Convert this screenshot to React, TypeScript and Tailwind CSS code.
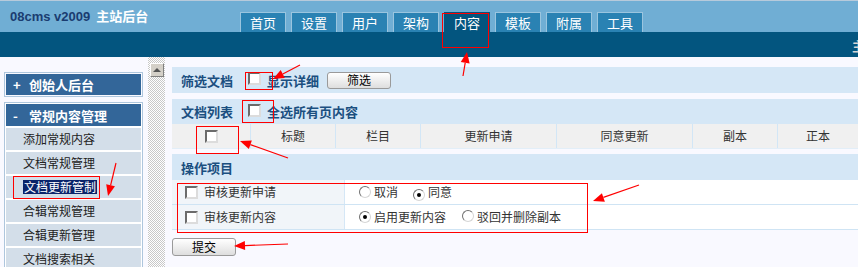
import React from 'react';

const tabs = ['首页', '设置', '用户', '架构', '内容', '模板', '附属', '工具'];
const items = ['添加常规内容', '文档常规管理', '文档更新管制', '合辑常规管理', '合辑更新管理', '文档搜索相关'];
const cols = ['', '标题', '栏目', '更新申请', '同意更新', '副本', '正本'];

function Check() {
  return (
    <span className="inline-block w-[13px] h-[13px] shrink-0 bg-white border-2 border-t-[#6b6b6b] border-l-[#6b6b6b] border-b-[#dcdcdc] border-r-[#dcdcdc]" />
  );
}

function Radio({ on }: { on?: boolean }) {
  return (
    <span className="inline-flex w-[12px] h-[12px] shrink-0 items-center justify-center rounded-full bg-white border border-t-[#707070] border-l-[#707070] border-b-[#d6d6d6] border-r-[#d6d6d6]">
      {on && <span className="w-[4px] h-[4px] rounded-full bg-black" />}
    </span>
  );
}

function Btn({ label, h }: { label: string; h: string }) {
  return (
    <button className={`w-[64px] ${h} rounded-[3px] border border-[#9a9a9a] bg-gradient-to-b from-white to-[#dedede] text-[12px] leading-none text-black`}>
      {label}
    </button>
  );
}

function Arrow({ x1, y1, x2, y2 }: { x1: number; y1: number; x2: number; y2: number }) {
  const dx = x2 - x1;
  const dy = y2 - y1;
  const len = Math.hypot(dx, dy);
  const ux = dx / len;
  const uy = dy / len;
  const bx = x2 - ux * 11;
  const by = y2 - uy * 11;
  const nx = -uy * 4.5;
  const ny = ux * 4.5;
  return (
    <g>
      <line x1={x1} y1={y1} x2={bx} y2={by} stroke="#ff0000" strokeWidth={1.2} />
      <polygon points={`${x2},${y2} ${bx + nx},${by + ny} ${bx - nx},${by - ny}`} fill="#ff0000" />
    </g>
  );
}

function Marks() {
  const rects = [
    [442, 13, 46, 34],
    [245, 72, 27, 17],
    [242, 100, 31, 22],
    [196, 126, 42, 27],
    [13, 176, 86, 22],
    [177, 183, 410, 49],
  ];
  return (
    <svg className="absolute left-0 top-0 pointer-events-none" width={858} height={267}>
      {rects.map(([x, y, w, h], i) => (
        <rect key={i} x={x + 0.5} y={y + 0.5} width={w} height={h} fill="none" stroke="#ff0000" strokeWidth={1} />
      ))}
      <Arrow x1={463} y1={76} x2={467} y2={52} />
      <Arrow x1={300} y1={65} x2={273} y2={79} />
      <Arrow x1={288} y1={158} x2={240} y2={141} />
      <Arrow x1={116} y1={163} x2={108} y2={196} />
      <Arrow x1={639} y1={185} x2={593} y2={201} />
      <Arrow x1={288} y1={244} x2={234} y2={246} />
    </svg>
  );
}

export default function App() {
  return (
    <div className="relative w-full h-[267px] overflow-hidden bg-[#f9f9ff] font-['Noto_Sans_CJK_SC',sans-serif] text-[12px]">
      {/* top header */}
      <div className="border-t border-[#b7cadb]">
        <div className="h-[31px] bg-[#70aed4] flex">
          <div className="w-[240px] shrink-0 pl-[10px] pt-[6px] font-bold leading-[18px] whitespace-nowrap">
            <span className="text-[#1a3c70] text-[13px] font-['Liberation_Sans',sans-serif]">08cms v2009</span>
            <span className="text-white ml-[6px] text-[13px]">主站后台</span>
          </div>
          <div className="flex gap-[5px] pt-[11px]">
            {tabs.map((t) => (
              <div
                key={t}
                className={`w-[46px] h-[20px] flex items-center justify-center text-white text-[13px] leading-none ${
                  t === '内容' ? 'bg-[#03557f]' : 'bg-[#2a82b3] border border-b-0 border-[#9ac5df]'
                }`}
              >
                {t}
              </div>
            ))}
          </div>
        </div>
        <div className="h-[25px] bg-[#03557f] flex overflow-hidden whitespace-nowrap">
          <div className="w-[852px] shrink-0" />
          <span className="text-[#d6d6d6] font-bold text-[13px] leading-[25px] pt-[1px]">主站</span>
        </div>
      </div>

      {/* body */}
      <div className="flex">
        <div className="w-[148px] shrink-0 pl-[4px] pt-[15px]">
          <div className="w-[139px] border border-[#aec6dd] p-[1px]">
            <div className="h-[21px] bg-[#336699] text-white font-bold text-[13px] flex items-center pl-[7px] leading-none">
              <span className="w-[16px]">+</span>创始人后台
            </div>
          </div>
          <div className="w-[139px] mt-[5px] border border-[#aec6dd] p-[1px] bg-white">
            <div className="h-[22px] bg-[#336699] text-white font-bold text-[13px] flex items-center pl-[7px] leading-none">
              <span className="w-[16px]">-</span>常规内容管理
            </div>
            {items.map((it) => (
              <div key={it} className="mt-[2px] h-[22px] bg-[#d3dee9] flex items-center pl-[17px] text-[#222] leading-none">
                {it === '文档更新管制' ? (
                  <span className="bg-[#0a246a] text-white px-[1px] py-[1px]">{it}</span>
                ) : (
                  it
                )}
              </div>
            ))}
          </div>
        </div>

        {/* scrollbar */}
        <div className="w-[17px] h-[210px] shrink-0 pt-[6px] pl-[2px] bg-[repeating-conic-gradient(#c8c8c8_0_25%,#ffffff_0_50%)] bg-[length:2px_2px]">
          <div className="w-[14px] h-[14px] bg-[#d4d0c8] border border-t-white border-l-white border-b-[#808080] border-r-[#808080] flex items-center justify-center">
            <span className="w-0 h-0 border-l-[4px] border-r-[4px] border-b-[4px] border-l-transparent border-r-transparent border-b-[#555]" />
          </div>
        </div>

        {/* main */}
        <div className="flex-1 ml-[7px] pt-[10px]">
          <div className="h-[26px] bg-[#d5e7f6] flex items-center pl-[9px]">
            <span className="font-bold text-[13px] text-[#1b4f80] leading-none">筛选文档</span>
            <span className="ml-[15px]"><Check /></span>
            <span className="ml-[6px] font-bold text-[13px] text-[#1b4f80] leading-none">显示详细</span>
            <span className="ml-[8px]"><Btn label="筛选" h="h-[17px]" /></span>
          </div>
          <div className="mt-[6px] h-[25px] bg-[#d5e7f6] flex items-center pl-[9px]">
            <span className="font-bold text-[13px] text-[#1b4f80] leading-none">文档列表</span>
            <span className="ml-[15px]"><Check /></span>
            <span className="ml-[6px] font-bold text-[13px] text-[#1b4f80] leading-none">全选所有页内容</span>
          </div>
          <div className="h-[25px] bg-[#f0f0f0] grid grid-cols-[78px_85px_85px_136px_136px_85px_1fr] border-b border-[#e2eef8]">
            {cols.map((c, i) => (
              <div key={i} className={`flex items-center justify-center text-[#333] ${i > 0 ? 'border-l border-[#d2e6f6]' : ''}`}>
                {i === 0 ? <Check /> : c}
              </div>
            ))}
          </div>

          <div className="mt-[5px] h-[26px] bg-[#d5e7f6] flex items-center pl-[9px]">
            <span className="font-bold text-[13px] text-[#1b4f80] leading-none">操作项目</span>
          </div>
          <div className="h-[25px] flex border-b border-[#cfe4f4] text-[#333]">
            <div className="w-[173px] bg-[#f1f5f9] border-r border-[#d5e7f6] flex items-center pl-[13px] gap-[6px]">
              <Check />审核更新申请
            </div>
            <div className="flex-1 bg-white flex items-center pl-[14px]">
              <Radio />
              <span className="ml-[3px]">取消</span>
              <span className="ml-[15px]"><Radio on /></span>
              <span className="ml-[3px]">同意</span>
            </div>
          </div>
          <div className="h-[25px] flex border-b border-[#cfe4f4] text-[#333]">
            <div className="w-[173px] bg-[#f1f5f9] border-r border-[#d5e7f6] flex items-center pl-[13px] gap-[6px]">
              <Check />审核更新内容
            </div>
            <div className="flex-1 bg-white flex items-center pl-[14px]">
              <Radio on />
              <span className="ml-[3px]">启用更新内容</span>
              <span className="ml-[16px]"><Radio /></span>
              <span className="ml-[3px]">驳回并删除副本</span>
            </div>
          </div>
          <div className="mt-[8px]">
            <Btn label="提交" h="h-[18px]" />
          </div>
        </div>
      </div>

      <Marks />
    </div>
  );
}
